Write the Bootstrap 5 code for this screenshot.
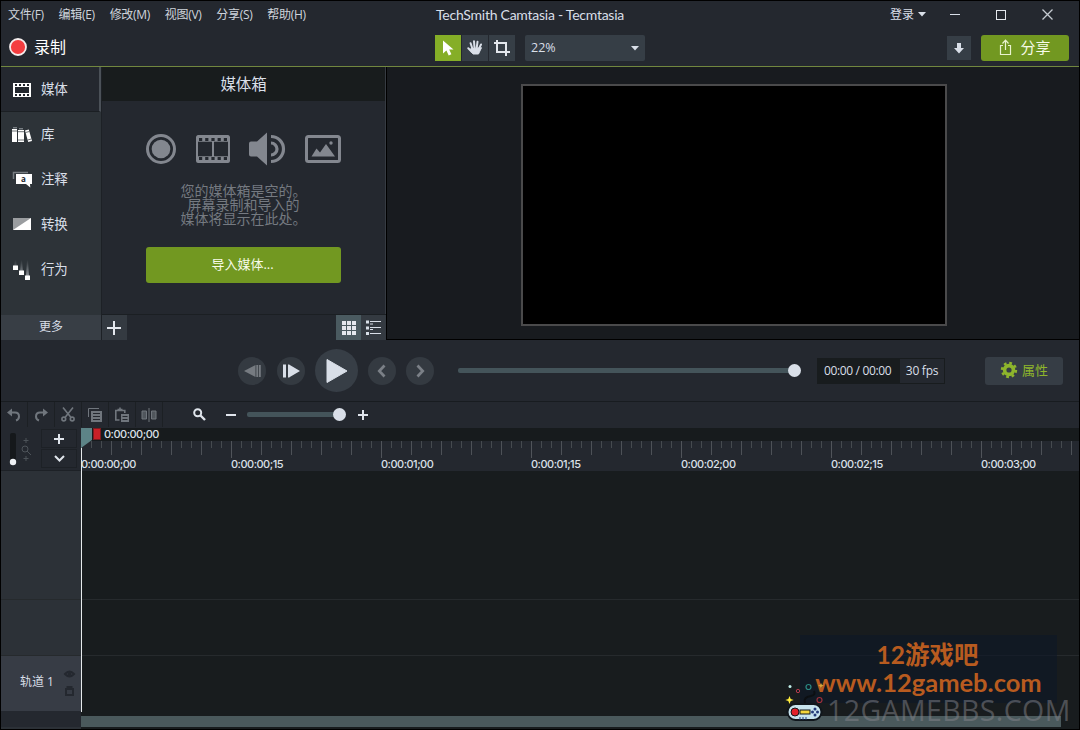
<!DOCTYPE html>
<html lang="zh-CN">
  <head>
    <meta charset="UTF-8" />
    <meta name="viewport" content="width=device-width, initial-scale=1.0" />
    <title>TechSmith Camtasia</title>
    <link
      href="https://cdn.jsdelivr.net/npm/bootstrap@5.3.0/dist/css/bootstrap.min.css"
      rel="stylesheet"
    />
    <style>
      body {
        width: 1080px;
        height: 730px;
        overflow: hidden;
        background-color: #000;
        color: #d9dfe8;
        font-family: "Open Sans", "Noto Sans CJK SC", sans-serif;
        font-size: 12px;
        line-height: 1;
      }
      svg {
        display: block;
        flex-shrink: 0;
      }
      .app-window {
        width: 1080px;
        height: 730px;
        border: 1px solid #000;
        background-color: #24282f;
        white-space: nowrap;
      }
      /* Header */
      .app-header {
        height: 66px;
        border-bottom: 1px solid #71873f;
      }
      .menu-row {
        height: 28px;
        padding-bottom: 1px;
      }
      .menu-list {
        width: 435px;
        padding-left: 7px;
        gap: 14.8px;
      }
      .menu-list a {
        color: #cfd4dc;
        text-decoration: none;
        font-size: 12px;
        letter-spacing: -0.3px;
      }
      .app-title {
        font-family: Lato, sans-serif;
        font-size: 14px;
        letter-spacing: -0.25px;
      }
      .win-buttons {
        gap: 36px;
        padding-right: 26px;
      }
      .tool-row {
        height: 37px;
        padding-top: 1px;
      }
      .record-box {
        width: 434px;
        padding-left: 8px;
        gap: 7px;
        font-size: 16px;
        color: #fff;
        padding-bottom: 2px;
      }
      .tool-btn {
        width: 26px;
        height: 26px;
        background-color: #363e46;
      }
      .tool-btn.active {
        background-color: #85ae27;
      }
      .zoom-select {
        width: 120px;
        height: 26px;
        margin-left: 10px;
        padding: 0 6px;
        background-color: #363e46;
        border-radius: 2px;
        font-size: 12.5px;
      }
      .download-btn {
        width: 24px;
        height: 24px;
        background-color: #363e46;
      }
      .green-btn {
        background-color: #729821;
        border-radius: 3px;
        color: #f7fbe9;
      }
      .share-btn {
        width: 88px;
        height: 26px;
        font-size: 15px;
        margin: 0 10px;
        padding-bottom: 2px;
      }
      /* Media area */
      .workspace {
        height: 273px;
      }
      .side-tabs {
        width: 101px;
        background-color: #2d3338;
        border-right: 1px solid #1d2126;
      }
      .side-tab {
        height: 45px;
        padding-left: 11px;
        gap: 9px;
        font-size: 13.5px;
        letter-spacing: -0.2px;
      }
      .side-tab.active {
        padding-top: 1px;
        background-color: #24282f;
        border-right: 2px solid #4b5158;
        border-bottom: 1px solid #1b1f23;
      }
      .more-tab {
        height: 25px;
        padding-bottom: 1px;
        background-color: #383e45;
      }
      .media-bin {
        width: 284px;
        border-right: 1px solid #363b42;
      }
      .bin-title {
        height: 34px;
        padding-top: 1px;
        background-color: #181c1d;
        font-size: 15.5px;
        letter-spacing: -0.2px;
      }
      .bin-icons {
        height: 36px;
        margin-top: 30px;
        padding-right: 1px;
        gap: 18.500px;
        color: #83878f;
      }
      .bin-hint {
        margin-top: 17px;
        color: #757a81;
        font-size: 14px;
        line-height: 14px;
      }
      .import-btn {
        width: 195px;
        height: 36px;
        margin: 21px 0 0 44px;
        padding: 0 2px 2px 0;
        font-size: 13px;
      }
      .bin-footer {
        height: 26px;
        margin-right: -1px;
        border-top: 1px solid #1b1f23;
      }
      .square-btn {
        width: 25px;
        height: 25px;
        background-color: #343a41;
      }
      .square-btn.active {
        background-color: #4a5a60;
      }
      .canvas-area {
        background-color: #181b1f;
        border-left: 1px solid #000;
        border-bottom: 1px solid #000;
        padding: 17px 0 0 134px;
      }
      .canvas-frame {
        width: 426px;
        height: 242px;
        background-color: #000;
        border: 2px solid #4a4a4b;
      }
      /* Playback */
      .player-bar {
        height: 62px;
        padding-left: 237px;
        border-bottom: 1px solid #181c20;
      }
      .round-btn {
        width: 28px;
        height: 28px;
        border-radius: 50%;
        background-color: #343a41;
      }
      .round-btn.play-btn {
        width: 43px;
        height: 43px;
        background-color: #373e46;
      }
      .seek-track {
        height: 5px;
        background-color: #44545a;
        border-radius: 2px;
      }
      .knob {
        width: 13px;
        height: 13px;
        margin-left: -7px;
        border-radius: 50%;
        background-color: #d9dfe8;
      }
      .time-box {
        width: 128px;
        height: 26px;
        margin-left: 16px;
        background-color: #181c1e;
        letter-spacing: -0.35px;
      }
      .time-text {
        padding-left: 7px;
      }
      .fps-box {
        width: 44px;
        height: 24px;
        margin-right: 1px;
        background-color: #24282f;
        letter-spacing: -0.25px;
      }
      .props-btn {
        width: 78px;
        height: 28px;
        margin-left: 40px;
        padding-bottom: 1px;
        background-color: #363d45;
        border-radius: 3px;
        color: #8eb52c;
        font-size: 13px;
      }
      /* Timeline */
      .timeline-tools {
        height: 26px;
        padding-bottom: 1px;
        color: #70767d;
      }
      .edit-btn {
        width: 27px;
        height: 25px;
        border-right: 1px solid #1c2024;
      }
      .timeline-left {
        width: 80px;
        background-color: #2c3137;
      }
      .track-tools {
        height: 43px;
        background-color: #24282f;
        border-bottom: 1px solid #1d2126;
      }
      .mini-col {
        gap: 1px;
        padding-top: 1px;
      }
      .mini-btn {
        width: 36px;
        height: 19px;
        border: 1px solid #1d2126;
      }
      .timeline-right {
        width: 998px;
        background-color: #181c1e;
      }
      .ruler-top {
        height: 13px;
        padding-left: 23px;
        background-color: #171b1d;
      }
      .ruler-text {
        font-family: Inter, sans-serif;
        font-size: 11px;
        font-weight: 500;
        letter-spacing: -0.5px;
        color: #dce1e8;
      }
      .ruler {
        height: 30px;
        padding-top: 16px;
        background-color: #24282f;
        background-image:
          repeating-linear-gradient(90deg, #50545a 0 1px, transparent 1px 150px),
          repeating-linear-gradient(90deg, #4d5157 0 1px, transparent 1px 30px),
          repeating-linear-gradient(90deg, #454a4f 0 1px, transparent 1px 10px);
        background-size: 100% 17px, 100% 14px, 100% 7px;
        background-repeat: no-repeat;
      }
      .ruler span {
        width: 150px;
        flex-shrink: 0;
      }
      .lane-1 {
        height: 129px;
        border-bottom: 1px solid #262a2d;
      }
      .lane-2 {
        height: 56px;
        border-bottom: 1px solid #262a2d;
      }
      .track-label {
        height: 55px;
        background-color: #373c45;
        padding: 0 1px 3px 19px;
      }
      .scroll-bar {
        height: 11px;
        margin-top: 60px;
        background-color: #4a595c;
        width: 980px;
      }
      .playhead {
        left: 0;
        top: 0;
      }
      /* Site stamps lying over the timeline */
      .stamp {
        left: 800px;
        top: 635px;
        width: 257px;
        height: 68px;
        background-color: rgba(14, 23, 39, 0.6);
        color: #b85b1f;
        font-family: Lato, "Noto Sans CJK SC", sans-serif;
        font-weight: 700;
      }
      .stamp-name {
        font-size: 24.5px;
        padding: 8px 2px 0 0;
      }
      .stamp-url {
        font-size: 25.500px;
        margin-top: 2px;
      }
      .stamp-bbs {
        left: 827px;
        top: 696px;
        font-family: "Open Sans", sans-serif;
        font-weight: 400;
        font-size: 28.5px;
        line-height: 28px;
        letter-spacing: 0.4px;
        color: rgba(132, 132, 139, 0.5);
      }
      .stamp-pad {
        left: 784px;
        top: 683px;
      }
    </style>
  </head>
  <body>
    <div class="app-window d-flex flex-column position-relative">
      <!-- Header -->
      <header class="app-header">
        <div class="menu-row d-flex align-items-center">
          <nav class="menu-list d-flex">
            <a href="#">文件(F)</a>
            <a href="#">编辑(E)</a>
            <a href="#">修改(M)</a>
            <a href="#">视图(V)</a>
            <a href="#">分享(S)</a>
            <a href="#">帮助(H)</a>
          </nav>
          <div class="app-title">TechSmith Camtasia - Tecmtasia</div>
          <div class="win-buttons d-flex align-items-center ms-auto">
            <div class="d-flex align-items-center" style="margin-right: -12px">
              <span>登录</span>
              <svg class="ms-1" width="8" height="5"><path d="M0 0h8L4 4.500z" fill="#d9dfe8" /></svg>
            </div>
            <svg width="10" height="10"><path d="M0 4.500h10" stroke="#d9dfe8" /></svg>
            <svg width="10" height="10"><rect x=".5" y=".5" width="9" height="9" fill="none" stroke="#e4e8ee" /></svg>
            <svg width="11" height="11"><path d="M.5.5l10 10M10.500.5l-10 10" stroke="#c5cad1" stroke-width="1.300" /></svg>
          </div>
        </div>
        <div class="tool-row d-flex align-items-center">
          <div class="record-box d-flex align-items-center">
            <svg width="18" height="18"><circle cx="9" cy="9" r="8" fill="#f43d40" stroke="#f5eeee" stroke-width="1.800" /></svg>
            <span>录制</span>
          </div>
          <div class="d-flex" style="gap: 1px">
            <div class="tool-btn active d-flex align-items-center justify-content-center">
              <svg width="12" height="17"><path d="M1 .5v13l3.400-3 2.300 5 2.700-1.200-2.200-4.800H11.500z" fill="#fff" /></svg>
            </div>
            <div class="tool-btn d-flex align-items-center justify-content-center">
              <svg width="16" height="16" fill="none" stroke="#d9dfe8" stroke-width="2" stroke-linecap="round">
                <path d="M5.500 9L3.600 3.200M7.500 8L7 1.300M9.700 8l.8-6.200M11.500 9.500l2.500-5M5 12L1.300 8.300" />
                <path d="M4.500 8.500l7.500-.5 2.500-.3-3 6.300H6L3 10z" fill="#d9dfe8" stroke-width="1" stroke-linejoin="round" />
              </svg>
            </div>
            <div class="tool-btn d-flex align-items-center justify-content-center">
              <svg width="18" height="16" fill="none" stroke="#e3e7ed" stroke-width="2"><path d="M4 0v12h13M1 3h12v13" /></svg>
            </div>
          </div>
          <div class="zoom-select d-flex align-items-center justify-content-between">
            <span>22%</span>
            <svg width="8" height="5"><path d="M0 0h8L4 4.500z" fill="#d9dfe8" /></svg>
          </div>
          <div class="download-btn d-flex align-items-center justify-content-center ms-auto">
            <svg width="10" height="11"><path d="M3 0h4v5h3L5 10.500 0 5h3z" fill="#d9dfe8" /></svg>
          </div>
          <div class="green-btn share-btn d-flex align-items-center justify-content-center">
            <svg class="me-2" width="13" height="17" fill="none" stroke="#e9f3cf" stroke-width="1.200">
              <path d="M4 6.500H1.500v9h10v-9H9M6.500 11V1.500M3.500 4.500l3-3.300 3 3.300" />
            </svg>
            <span>分享</span>
          </div>
        </div>
      </header>

      <!-- Media bin and canvas -->
      <div class="workspace d-flex">
        <aside class="side-tabs d-flex flex-column">
          <div class="side-tab active d-flex align-items-center">
            <svg width="20" height="16">
              <path d="M1 1h18v14H1z" fill="#fff" />
              <path d="M3 5h14v6H3z" fill="#24282f" />
              <path d="M3 3h14M3 13h14" stroke="#24282f" stroke-width="1.800" stroke-dasharray="2 2" />
            </svg>
            <span>媒体</span>
          </div>
          <div class="side-tab d-flex align-items-center">
            <svg width="20" height="16" fill="#fff">
              <path d="M0 2h5v13H0zM6 3h6v12H6z" />
              <path d="M13 3.500l3.800-1L20 14l-3.800 1z" />
              <path d="M0 4h5M6 4.700h6M6 13h6M13.500 5.500l3.800-1M15.600 13l3.800-1" stroke="#2d3338" stroke-width=".7" />
              <path d="M1 .8h4M7 1.800h4" stroke="#9ba0a5" />
            </svg>
            <span>库</span>
          </div>
          <div class="side-tab d-flex align-items-center">
            <svg width="20" height="17">
              <path d="M1.500 8V1.500H16" fill="none" stroke="#777c81" stroke-width="1.500" />
              <path d="M4 3h16v10h-2l.3 3.500L14 13H4z" fill="#fff" />
              <text x="9" y="11" font-size="8" font-weight="700" fill="#24282f">a</text>
            </svg>
            <span>注释</span>
          </div>
          <div class="side-tab d-flex align-items-center">
            <svg width="20" height="13">
              <path d="M1 0h18v12H1z" fill="#9a9da0" />
              <path d="M19 0v12H1z" fill="#fff" />
            </svg>
            <span>转换</span>
          </div>
          <div class="side-tab d-flex align-items-center">
            <svg width="20" height="20">
              <defs>
                <linearGradient id="trail" x1="0" y1="0" x2="0" y2="1">
                  <stop offset="0" stop-color="#8b9095" stop-opacity="0" />
                  <stop offset="1" stop-color="#8b9095" />
                </linearGradient>
              </defs>
              <path d="M3 0h1l1 7H2zM9 0h1l1 12H8zM15 0h1l1 16h-3z" fill="url(#trail)" />
              <path d="M1 5.500h5v4.500H1zM7 10.500h5V15H7zM13 15.500h5V20h-5z" fill="#fff" />
            </svg>
            <span>行为</span>
          </div>
          <div class="more-tab d-flex align-items-center justify-content-center mt-auto">更多</div>
        </aside>

        <section class="media-bin d-flex flex-column">
          <div class="bin-title d-flex align-items-center justify-content-center">媒体箱</div>
          <div class="bin-icons d-flex align-items-center justify-content-center">
            <svg width="32" height="32" fill="none" stroke="currentColor">
              <circle cx="16" cy="16" r="13.500" stroke-width="3" />
              <circle cx="16" cy="16" r="9.300" fill="currentColor" stroke="none" />
            </svg>
            <svg width="34" height="28">
              <rect x="1" y="1" width="32" height="26" rx="1.500" fill="none" stroke="currentColor" stroke-width="2" />
              <path d="M1 3.800h32M1 24.200h32" stroke="currentColor" stroke-width="6" />
              <path d="M3 4.500h29M3 23.500h29" stroke="#24282f" stroke-width="3" stroke-dasharray="3.200 3" />
              <path d="M17 6v16" stroke="currentColor" stroke-width="2" />
            </svg>
            <svg width="38" height="34">
              <path d="M1 11.500q0-2 2-2h6L19 .5v33l-10-9H3q-2 0-2-2z" fill="currentColor" />
              <path d="M23 4.500a12.500 12.500 0 0 1 0 25M23 11a6 6 0 0 1 0 12" fill="none" stroke="currentColor" stroke-width="3.200" />
            </svg>
            <svg width="36" height="28">
              <rect x="1.500" y="1.500" width="33" height="25" rx="2" fill="none" stroke="currentColor" stroke-width="3" />
              <path d="M6.500 21.500l5-8 3.500 4 6-8.500 9 12.500z" fill="currentColor" />
              <circle cx="26" cy="8" r="1.700" fill="currentColor" />
            </svg>
          </div>
          <div class="bin-hint text-center">您的媒体箱是空的。<br />屏幕录制和导入的<br />媒体将显示在此处。</div>
          <div class="green-btn import-btn d-flex align-items-center justify-content-center">导入媒体...</div>
          <div class="bin-footer d-flex mt-auto">
            <div class="square-btn d-flex align-items-center justify-content-center">
              <svg width="15" height="14"><path d="M7 0v14M0 7h14" stroke="#e4e8ee" stroke-width="2" /></svg>
            </div>
            <div class="square-btn active d-flex align-items-center justify-content-center ms-auto">
              <svg width="14" height="14"><path d="M0 2h14M0 7h14M0 12h14" stroke="#e4e8ee" stroke-width="4" stroke-dasharray="4 1" /></svg>
            </div>
            <div class="square-btn d-flex align-items-center justify-content-center">
              <svg width="15" height="15" stroke="#d9dfe8">
                <path d="M0 2h3M0 8h3M0 13.500h3" stroke-width="3" />
                <path d="M4 1.500h11M4 7.500h11M4 13.500h11" stroke-width="1" />
                <path d="M4 4h3M4 9.500h3" stroke-width="1" />
              </svg>
            </div>
          </div>
        </section>

        <main class="canvas-area flex-grow-1">
          <div class="canvas-frame"></div>
        </main>
      </div>

      <!-- Playback controls -->
      <div class="player-bar d-flex align-items-center">
        <div class="round-btn d-flex align-items-center justify-content-center">
          <svg width="17" height="14" fill="#767b81"><path d="M0 7L11.500 1v12zM12.300 1h1.700v12h-1.700zM14.800 1h2v12h-2z" /></svg>
        </div>
        <div class="round-btn d-flex align-items-center justify-content-center" style="margin-left: 11px">
          <svg width="17" height="14" fill="#d9dfe8"><path d="M0 .5h3v13H0zM5 .5h1.500v13H5zM6 .5L17 7 6 13.500z" /></svg>
        </div>
        <div class="round-btn play-btn d-flex align-items-center justify-content-center" style="margin-left: 10px">
          <svg width="22" height="26"><path d="M1 1.500L21 13 1 24.500z" fill="#d9dfe8" stroke="#d9dfe8" stroke-linejoin="round" /></svg>
        </div>
        <div class="round-btn d-flex align-items-center justify-content-center" style="margin-left: 10px">
          <svg width="10" height="14"><path d="M7.500 1.500L2.300 7l5.200 5.500" fill="none" stroke="#7b8087" stroke-width="2.700" /></svg>
        </div>
        <div class="round-btn d-flex align-items-center justify-content-center" style="margin-left: 10px">
          <svg width="10" height="14"><path d="M2.500 1.500L7.700 7l-5.200 5.500" fill="none" stroke="#7b8087" stroke-width="2.700" /></svg>
        </div>
        <div class="d-flex align-items-center" style="margin-left: 24px">
          <div class="seek-track" style="width: 337px"></div>
          <div class="knob"></div>
        </div>
        <div class="time-box d-flex align-items-center justify-content-between">
          <span class="time-text">00:00 / 00:00</span>
          <span class="fps-box d-flex align-items-center justify-content-center">30 fps</span>
        </div>
        <div class="props-btn d-flex align-items-center justify-content-center">
          <svg class="me-1" width="18" height="18" fill="none" stroke="#8eb52c">
            <circle cx="9" cy="9" r="4.400" stroke-width="3.600" />
            <circle cx="9" cy="9" r="7" stroke-width="2.400" stroke-dasharray="2.750 2.750" />
          </svg>
          <span>属性</span>
        </div>
      </div>

      <!-- Timeline toolbar -->
      <div class="timeline-tools d-flex align-items-center">
        <div class="edit-btn d-flex align-items-center justify-content-center">
          <svg width="14" height="14" fill="none" stroke="currentColor" stroke-width="2"><path d="M2 4.500h6q4 0 4 4 0 3-3 4" /><path d="M0 4.500L5 .5v8z" fill="currentColor" stroke="none" /></svg>
        </div>
        <div class="edit-btn d-flex align-items-center justify-content-center">
          <svg width="14" height="14" fill="none" stroke="currentColor" stroke-width="2"><path d="M12 4.500H6q-4 0-4 4 0 3 3 4" /><path d="M14 4.500L9 .5v8z" fill="currentColor" stroke="none" /></svg>
        </div>
        <div class="edit-btn d-flex align-items-center justify-content-center">
          <svg width="14" height="15" fill="none" stroke="currentColor" stroke-width="1.600"><path d="M2 .5l8 10M12 .5l-8 10" /><circle cx="2.800" cy="12" r="1.900" /><circle cx="11.200" cy="12" r="1.900" /></svg>
        </div>
        <div class="edit-btn d-flex align-items-center justify-content-center">
          <svg width="14" height="14"><path d="M.5 9V.5H11" fill="none" stroke="currentColor" /><rect x="3" y="3" width="11" height="11" fill="currentColor" /><path d="M5 5.500h7M5 8.500h7M5 11.500h7" stroke="#24282f" /></svg>
        </div>
        <div class="edit-btn d-flex align-items-center justify-content-center">
          <svg width="14" height="15"><path d="M4.500 13H.8V3.500h9V6M2.500 2.500h5M5 .5v2" fill="none" stroke="currentColor" stroke-width="1.600" /><rect x="6" y="7" width="8" height="8" fill="currentColor" /><path d="M7.500 9.500h5M7.500 12.500h5" stroke="#24282f" /></svg>
        </div>
        <div class="edit-btn d-flex align-items-center justify-content-center">
          <svg width="16" height="14"><path d="M5.500 3H1v8h4.500zM10.500 3H15v8h-4.500z" fill="#50565c" stroke="currentColor" /><path d="M8 0v14" stroke="currentColor" /></svg>
        </div>
        <svg style="margin-left: 30px" width="13" height="13" fill="none" stroke="#e0e5ec"><circle cx="4.700" cy="4.700" r="3.500" stroke-width="2" /><path d="M7.500 7.500L12 12" stroke-width="2.400" /></svg>
        <svg style="margin-left: 20px" width="10" height="10"><path d="M0 5h10" stroke="#e0e5ec" stroke-width="2" /></svg>
        <div class="d-flex align-items-center" style="margin-left: 11px">
          <div class="seek-track" style="width: 93px"></div>
          <div class="knob"></div>
        </div>
        <svg style="margin-left: 12px" width="10" height="10"><path d="M5 0v10M0 5h10" stroke="#e0e5ec" stroke-width="2" /></svg>
      </div>

      <!-- Timeline -->
      <div class="d-flex flex-grow-1">
        <div class="timeline-left">
          <div class="track-tools d-flex">
            <svg width="40" height="42">
              <rect x="9" y="5" width="6" height="31" rx="2" fill="#15181b" />
              <circle cx="12" cy="34" r="3.200" fill="#eef1f5" />
              <g fill="none" stroke="#4d5359">
                <circle cx="24" cy="21" r="3" />
                <path d="M26 23l4 4M25 10v5M22.500 12.500h5M25 28v5M22.500 30.500h5" />
              </g>
            </svg>
            <div class="mini-col d-flex flex-column">
              <div class="mini-btn d-flex align-items-center justify-content-center">
                <svg width="10" height="10"><path d="M5 0v10M0 5h10" stroke="#e0e5ec" stroke-width="2" /></svg>
              </div>
              <div class="mini-btn d-flex align-items-center justify-content-center">
                <svg width="11" height="7"><path d="M1 1l4.500 4.500L10 1" fill="none" stroke="#e0e5ec" stroke-width="2" /></svg>
              </div>
            </div>
          </div>
          <div class="lane-1"></div>
          <div class="lane-2"></div>
          <div class="track-label d-flex align-items-center">
            <span>轨道 1</span>
            <svg class="ms-auto me-1" width="13" height="30" fill="none" stroke="#24282f" stroke-width="2">
              <path d="M2 7q4.500-5 9 0-4.500 5-9 0z" />
              <circle cx="6.500" cy="7" r="1" />
              <path d="M3 22h7v6H3zM4.500 22v-2h4v2" />
            </svg>
          </div>
          <div style="height: 16px; background-color: #24282f"></div>
        </div>
        <div class="timeline-right position-relative">
          <div class="ruler-top ruler-text d-flex align-items-center">0:00:00;00</div>
          <div class="ruler ruler-text d-flex align-items-center overflow-hidden">
            <span>0:00:00;00</span>
            <span>0:00:00;15</span>
            <span>0:00:01;00</span>
            <span>0:00:01;15</span>
            <span>0:00:02;00</span>
            <span>0:00:02;15</span>
            <span>0:00:03;00</span>
          </div>
          <div class="lane-1"></div>
          <div class="lane-2"></div>
          <div class="scroll-bar"></div>
          <svg class="playhead position-absolute" width="24" height="285">
            <path d="M0 0h11v12L0 20z" fill="#5d8487" />
            <rect x="12.500" y=".5" width="7" height="11" fill="#c92027" stroke="#7d1a1f" />
            <path d="M.5 20v264" stroke="#e6eaec" />
          </svg>
        </div>
      </div>
    </div>

    <!-- Stamps -->
    <div class="stamp position-absolute text-center">
      <div class="stamp-name">12游戏吧</div>
      <div class="stamp-url">www.12gameb.com</div>
    </div>
    <div class="stamp-bbs position-absolute">12GAMEBBS.COM</div>
    <svg class="stamp-pad position-absolute" width="42" height="42">
      <path d="M21 20q-2-6 6-7 5-1 3-5" fill="none" stroke="#0c0f12" stroke-width="2" />
      <rect x="3.500" y="21" width="34" height="16" rx="8" fill="#c7e3ee" stroke="#10161c" stroke-width="2" />
      <circle cx="11" cy="29" r="4" fill="#e0212b" stroke="#10161c" />
      <rect x="16" y="27" width="10" height="4" fill="#f4d53c" stroke="#10161c" />
      <circle cx="31" cy="26" r="1.500" fill="#233a78" />
      <circle cx="28.500" cy="29" r="1.500" fill="#233a78" />
      <circle cx="33.500" cy="29" r="1.500" fill="#233a78" />
      <circle cx="31" cy="32" r="1.500" fill="#233a78" />
      <path d="M16 34v3M19 34v3M22 34v3" stroke="#233a78" />
      <path d="M5.500 13l1.200 3 3 1-3 1-1.200 3-1.200-3-3-1 3-1z" fill="#ffec3d" />
      <path d="M37 0l1 2 2 .5-2 .7-1 2-1-2-2-.7 2-.5z" fill="#d8a63a" />
      <circle cx="6" cy="3.500" r="1.500" fill="#bfeee8" />
      <circle cx="24.500" cy="4" r="2.500" fill="none" stroke="#2b8a83" stroke-width="1.200" />
      <circle cx="14" cy="8" r="1.700" fill="none" stroke="#b33a4c" />
      <circle cx="35.500" cy="17" r="2.500" fill="none" stroke="#9b2f3a" stroke-width="1.200" />
    </svg>
    <script src="https://cdn.jsdelivr.net/npm/bootstrap@5.3.0/dist/js/bootstrap.bundle.min.js"></script>
  </body>
</html>
